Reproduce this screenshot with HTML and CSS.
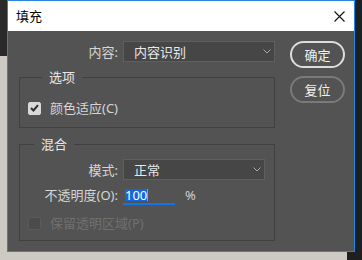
FILE: index.html
```html
<!DOCTYPE html>
<html lang="zh-CN">
<head>
    <meta charset="UTF-8">
    <title>填充</title>
    <link rel="stylesheet" href="styles.css">
</head>
<body>
    <div class="dialog">
        <div class="titlebar">
            <span class="title">填充</span>
            <svg class="close" width="11" height="11" viewBox="0 0 11 11">
                <path d="M0.5 0.5L10.5 10.5M10.5 0.5L0.5 10.5" stroke="#111" stroke-width="1.1" fill="none"/>
            </svg>
        </div>
        <div class="content">
            <form class="main">
                <div class="row top-row">
                    <span class="label">内容:</span>
                    <div class="select wide">
                        <span>内容识别</span>
                        <svg class="chevron" width="8" height="5" viewBox="0 0 8 5"><path d="M0.5 0.5L4 4L7.5 0.5" stroke="#a8a8a8" fill="none"/></svg>
                    </div>
                </div>

                <fieldset class="group options">
                    <legend>选项</legend>
                    <label class="check">
                        <span class="box checked">
                            <svg width="9" height="8" viewBox="0 0 9 8"><path d="M1 4L3.5 6.5L8 1.2" stroke="#2e2e2e" stroke-width="2" fill="none"/></svg>
                        </span>
                        颜色适应(C)
                    </label>
                </fieldset>

                <fieldset class="group blend">
                    <legend>混合</legend>
                    <div class="row">
                        <span class="label">模式:</span>
                        <div class="select narrow">
                            <span>正常</span>
                            <svg class="chevron" width="8" height="5" viewBox="0 0 8 5"><path d="M0.5 0.5L4 4L7.5 0.5" stroke="#a8a8a8" fill="none"/></svg>
                        </div>
                    </div>
                    <div class="row opacity-row">
                        <span class="label">不透明度(O):</span>
                        <div class="number-input"><span class="selected">100</span></div>
                        <span class="unit">%</span>
                    </div>
                    <label class="check disabled">
                        <span class="box"></span>
                        保留透明区域(P)
                    </label>
                </fieldset>
            </form>

            <div class="buttons">
                <button class="btn primary">确定</button>
                <button class="btn">复位</button>
            </div>
        </div>
    </div>
</body>
</html>
```

FILE: styles.css
```css
body {
    margin: 0;
    height: 260px;
    overflow: hidden;
    font-family: 'Noto Sans', 'Noto Sans CJK SC', sans-serif;
    background:
        linear-gradient(#2a2a2a, #2a2a2a) 0 0 / 7px 56px no-repeat,
        linear-gradient(to right, transparent 355px, #1f1f1f 355px),
        linear-gradient(to right, transparent 347px, #1f1f1f 347px) 0 252px / 100% 8px no-repeat,
        #cdc9c3;
}

.dialog {
    margin-left: 7px;
    width: 348px;
    height: 252px;
    box-sizing: border-box;
    border: 1px solid #2585e0;
    background: #535353;
    display: flex;
    flex-direction: column;
}

.titlebar {
    height: 30px;
    background: #fff;
    display: flex;
    align-items: center;
    justify-content: space-between;
    padding: 0 9px 0 8px;
}

.title {
    font-size: 13px;
    color: #000;
    line-height: 16px;
}

.close {
    display: block;
}

.content {
    display: flex;
    padding-top: 10px;
}

/* left column */
.main {
    width: 256px;
    padding-left: 11px;
    margin: 0;
    color: #d6d6d6;
    font-size: 13px;
}

.row {
    display: flex;
    align-items: center;
}

.label {
    text-align: right;
    margin-right: 5px;
    line-height: 16px;
    white-space: nowrap;
}

.top-row .label {
    width: 99px;
}

.group .label {
    width: 98px;
}

.select {
    height: 21px;
    box-sizing: border-box;
    background: #464646;
    border: 1px solid #5f5f5f;
    display: flex;
    align-items: center;
    justify-content: space-between;
    padding: 0 3px 0 10px;
    color: #e8e8e8;
    line-height: 16px;
}

.select.wide {
    width: 152px;
}

.select.narrow {
    width: 142px;
}

.chevron {
    display: block;
}

.group {
    margin: 0;
    padding: 0;
    border: 1px solid #404040;
    min-inline-size: auto;
}

.group legend {
    margin-left: 14px;
    padding: 0 7px;
    color: #e8e8e8;
    line-height: 16px;
}

.options {
    margin-top: 7px;
    padding: 15px 0 11px 8px;
}

.blend {
    margin-top: 8px;
    padding: 7px 0 9px 0;
}

.check {
    display: flex;
    align-items: center;
    line-height: 16px;
}

.blend .check {
    margin-top: 10px;
    padding-left: 8px;
}

.box {
    width: 13px;
    height: 13px;
    box-sizing: border-box;
    border-radius: 2px;
    margin-right: 9px;
    display: flex;
    align-items: center;
    justify-content: center;
    background: #4b4b4b;
    border: 1px solid #5a5a5a;
}

.box.checked {
    background: #d9d9d9;
    border-color: #d9d9d9;
}

.check.disabled {
    color: #707070;
}

.opacity-row {
    margin-top: 5px;
}

.number-input {
    width: 52px;
    height: 20px;
    box-sizing: border-box;
    padding: 3px 0 0 2px;
    border-bottom: 2px solid #1473e6;
    line-height: 15px;
}

.selected {
    display: inline-block;
    background: #1268d8;
    color: #fff;
    line-height: 12px;
    height: 12px;
    padding: 0;
    border-right: 1px solid #f08a24;
}

.unit {
    margin-left: 10px;
    color: #d0d0d0;
    line-height: 16px;
}

/* right column */
.buttons {
    display: flex;
    flex-direction: column;
    gap: 8px;
    margin-left: 15px;
}

.btn {
    width: 55px;
    height: 27px;
    box-sizing: border-box;
    border-radius: 14px;
    background: transparent;
    border: 2px solid #7a7a7a;
    color: #f0f0f0;
    font-family: 'Noto Sans CJK SC', sans-serif;
    font-size: 13px;
    line-height: 16px;
    padding: 0;
}

.btn.primary {
    border-color: #dcdcdc;
}
```
